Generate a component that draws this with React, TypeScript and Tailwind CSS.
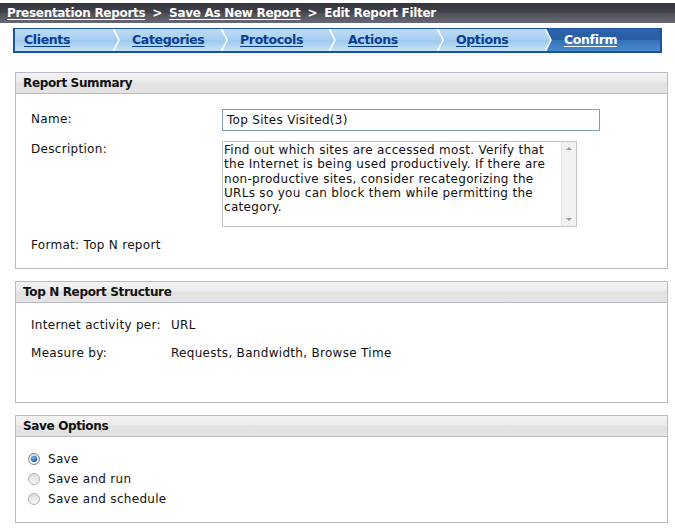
import React from "react";

const steps = ["Clients", "Categories", "Protocols", "Actions", "Options", "Confirm"];

function Chevron({ dark }: { dark?: boolean }) {
  return (
    <svg width="11" height="22" viewBox="0 0 11 22" className="shrink-0 block">
      <defs>
        <linearGradient id="dk" x1="0" y1="0" x2="0" y2="1">
          <stop offset="0" stopColor="#2c62ab" />
          <stop offset="0.5" stopColor="#2a5fa8" />
          <stop offset="0.5" stopColor="#3270b8" />
          <stop offset="1" stopColor="#4a8ccc" />
        </linearGradient>
      </defs>
      {dark && <polygon points="1,0 11,0 11,22 1,22 7,11" fill="url(#dk)" />}
      <polyline points="1,-1 7,11 1,23" fill="none" stroke="#ffffff" strokeWidth="1.6" />
    </svg>
  );
}

function Panel({ title, children, className }: { title: string; children: React.ReactNode; className?: string }) {
  return (
    <div className={"ml-[15px] w-[653px] border border-[#b9b9c6] bg-white " + (className ?? "")}>
      <div className="h-[21px] border-b border-[#b9b9c6] bg-[linear-gradient(to_bottom,#f3f3f3,#ececec_45%,#e2e2e2_50%,#e4e4e4)] pl-[7px] flex items-center">
        <span className="font-bold text-[12px] tracking-[-0.35px] text-[#111]">{title}</span>
      </div>
      {children}
    </div>
  );
}

function Radio({ checked }: { checked?: boolean }) {
  return (
    <span
      className={
        "relative inline-flex w-[12px] h-[12px] rounded-full border items-center justify-center shrink-0 " +
        (checked
          ? "border-[#8a8a8a] bg-[linear-gradient(to_bottom,#d4d4d4,#f6f6f6)]"
          : "border-[#b4b4b4] bg-[linear-gradient(to_bottom,#dcdcdc,#f8f8f8)]")
      }
    >
      {checked && (
        <span className="w-[6px] h-[6px] rounded-full bg-[radial-gradient(circle_at_40%_35%,#7ec0f0,#1a64b8_60%,#0d4a94)]" />
      )}
    </span>
  );
}

export default function App() {
  return (
    <div className="w-[675px] h-[532px] bg-white font-['DejaVu_Sans',sans-serif] text-[12px] tracking-[0.3px] text-[#111] overflow-hidden">
      <div className="pt-[3px]">
        <div className="h-[20px] bg-[linear-gradient(to_bottom,#34343c,#44444d_50%,#50505a_52%,#686874)] flex items-center pl-[7px] text-white font-bold text-[12px] tracking-[-0.3px] whitespace-nowrap">
          <span className="underline underline-offset-2">Presentation Reports</span>
          <span className="mx-[7px]">&gt;</span>
          <span className="underline underline-offset-2">Save As New Report</span>
          <span className="mx-[7px]">&gt;</span>
          <span>Edit Report Filter</span>
        </div>
      </div>

      <div className="mt-[5px] ml-[13px] w-[649px] h-[25px] border-t border-b-2 border-l-2 border-r-2 border-[#1b52a0] bg-[linear-gradient(to_bottom,#bedcf5,#a7cff0_48%,#9dc9ee_52%,#c6e2f8)] flex">
        {steps.map((s, i) => {
          const last = i === steps.length - 1;
          return (
            <div
              key={s}
              className={
                "flex items-stretch h-[22px] " +
                (last
                  ? "flex-1 bg-[linear-gradient(to_bottom,#2c62ab,#2a5fa8_50%,#3270b8_50%,#4a8ccc)]"
                  : "w-[108px]")
              }
            >
              <span
                className={
                  "flex-1 pl-[9px] flex items-center font-bold text-[12.5px] tracking-[-0.35px] underline underline-offset-2 " +
                  (last ? "text-white" : "text-[#0b3d91]")
                }
              >
                {s}
              </span>
              {!last && <Chevron dark={i === steps.length - 2} />}
            </div>
          );
        })}
      </div>

      <Panel title="Report Summary" className="mt-[19px]">
        <div className="pl-[15px] pt-[15px] pb-[16px]">
          <div className="flex items-start">
            <div className="w-[191px] pt-[3px] leading-[14px]">Name:</div>
            <div className="w-[378px] h-[22px] border border-[#7f9db9] flex items-center pl-[4px] leading-[14px]">
              Top Sites Visited(3)
            </div>
          </div>
          <div className="flex items-start mt-[10px]">
            <div className="w-[191px] pt-[1px] leading-[14px]">Description:</div>
            <div className="w-[355px] h-[86px] border border-[#c4c4c4] flex">
              <div className="flex-1 pl-[1px] pt-[1px] leading-[14.3px]">
                Find out which sites are accessed most. Verify that the Internet is being used productively. If there are non-productive sites, consider recategorizing the URLs so you can block them while permitting the category.
              </div>
              <div className="w-[15px] bg-[#f1f1f1] border-l border-[#e6e6e6] flex flex-col justify-between items-center py-[5px]">
                <span className="block w-0 h-0 border-l-[3px] border-r-[3px] border-b-[3px] border-l-transparent border-r-transparent border-b-[#9a9a9a]" />
                <span className="block w-0 h-0 border-l-[3px] border-r-[3px] border-t-[3px] border-l-transparent border-r-transparent border-t-[#9a9a9a]" />
              </div>
            </div>
          </div>
          <div className="mt-[11px] leading-[14px]">Format: Top N report</div>
        </div>
      </Panel>

      <Panel title="Top N Report Structure" className="mt-[12px]">
        <div className="pl-[15px] pt-[15px] pb-[42px] leading-[14px]">
          <div className="flex">
            <div className="w-[140px]">Internet activity per:</div>
            <div>URL</div>
          </div>
          <div className="flex mt-[14px]">
            <div className="w-[140px]">Measure by:</div>
            <div>Requests, Bandwidth, Browse Time</div>
          </div>
        </div>
      </Panel>

      <Panel title="Save Options" className="mt-[12px]">
        <div className="pl-[12px] pt-[12px] pb-[13px]">
          {["Save", "Save and run", "Save and schedule"].map((t, i) => (
            <div key={t} className="h-[20px] flex items-center">
              <Radio checked={i === 0} />
              <span className="ml-[8px] leading-[14px]">{t}</span>
            </div>
          ))}
        </div>
      </Panel>
    </div>
  );
}
